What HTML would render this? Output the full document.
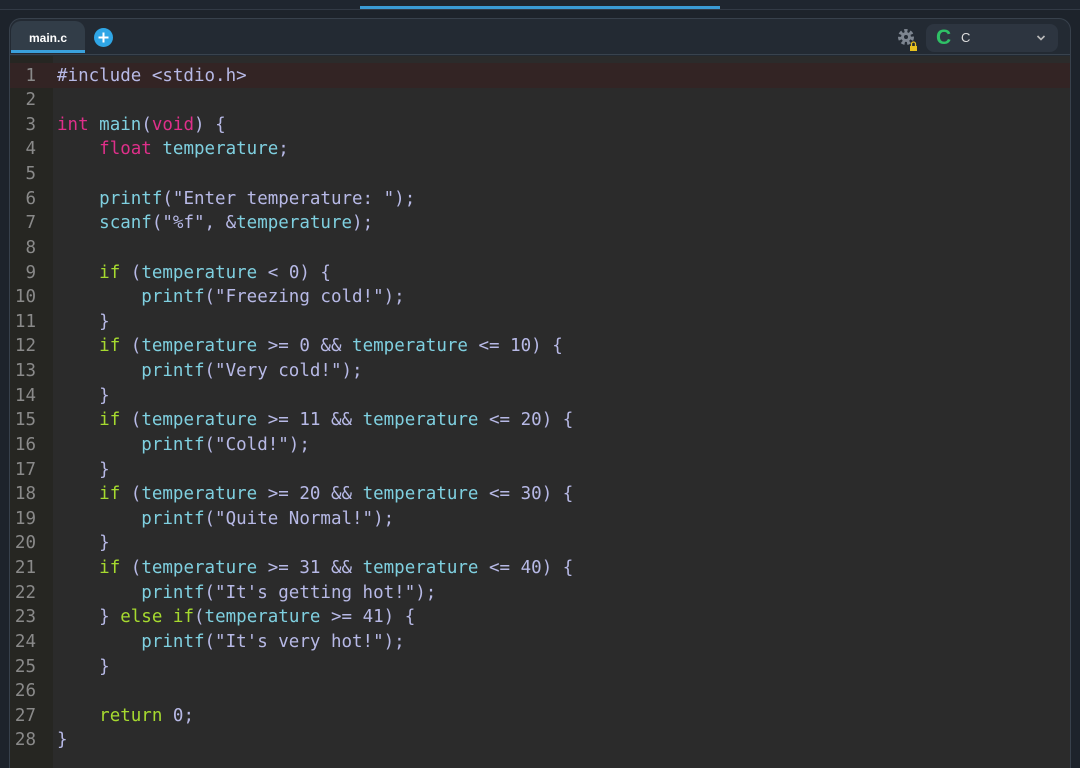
<!DOCTYPE html>
<html style="overflow:hidden;height:768px"><head><style>
body{margin:0;width:1080px;height:768px;background:#1d232b;overflow:hidden;font-family:"Liberation Sans",sans-serif;position:relative}
.top{position:absolute;left:0;top:0;width:1080px;height:9px;background:#1f262f;border-bottom:1px solid #323a45}
.topline{position:absolute;left:360px;top:6px;width:360px;height:3px;background:#3a9bd5}
.panel{position:absolute;left:9px;top:18px;width:1062px;height:750px;background:#232a33;border:1px solid #38414c;border-bottom:none;border-radius:12px 12px 0 0;overflow:hidden;box-sizing:border-box}
.tab{position:absolute;left:1px;top:2px;width:74px;height:32px;background:#323d48;border-radius:10px 10px 0 0;color:#fff;font-weight:bold;font-size:12px;line-height:34px;text-align:center;border-bottom:3px solid #3aa1dc;box-sizing:border-box}
.plus{position:absolute;left:84px;top:9px;width:19px;height:19px;border-radius:50%;background:#2fa6e6}
.sep{position:absolute;left:0;top:35px;width:100%;height:1px;background:#39434e}
.lang{position:absolute;left:916px;top:5px;width:132px;height:28px;background:#2d3540;border-radius:8px;color:#ddd;font-size:13px}
.editor{position:absolute;left:0;top:37px;width:1060px;height:730px;background:#2b2b2b}
.gutter{position:absolute;left:0;top:0;width:43px;height:100%;background:#262622}
.hl{position:absolute;left:0;top:7px;width:100%;height:25px;background:#332424}
pre{position:absolute;left:0;top:7.5px;margin:0;font-family:"DejaVu Sans Mono",monospace;font-size:17.5px;line-height:24.63px;color:#b7b9e6}
.ln{color:#8a8a8a;display:inline-block;width:26px;text-align:right;margin-right:21px}
.k{color:#df2f8a}.c{color:#7fd0e0}.g{color:#a6da2f}
</style></head><body>
<div class="top"></div><div class="topline"></div>
<div class="panel">
<div class="tab">main.c</div>
<div class="plus"><svg width="19" height="19"><path d="M9.5 4.5v10M4.5 9.5h10" stroke="#fff" stroke-width="2"/></svg></div>
<svg style="position:absolute;left:886px;top:8px" width="26" height="26" viewBox="0 0 26 26"><circle cx="10" cy="10" r="6" fill="none" stroke="#7d8590" stroke-width="4" stroke-dasharray="3 2.3"/><circle cx="10" cy="10" r="5" fill="#7d8590"/><circle cx="10" cy="10" r="2" fill="#232a33"/><rect x="14" y="19" width="7" height="5" fill="#e8c21f"/><path d="M15.5 19v-2a2 2 0 0 1 4 0v2" stroke="#e8c21f" fill="none" stroke-width="1.3"/></svg>
<div class="lang"><span style="position:absolute;left:10px;top:2px;color:#2fc066;font-weight:bold;font-size:21px">C</span><span style="position:absolute;left:35px;top:6px">C</span><svg style="position:absolute;right:12px;top:10px" width="10" height="8"><path d="M1.5 2l3.5 3.5L8.5 2" stroke="#bbb" stroke-width="1.6" fill="none"/></svg></div>
<div class="sep"></div>
<div class="editor"><div class="gutter"></div><div class="hl"></div>
<pre><span class="ln">1</span>#include &lt;stdio.h&gt;
<span class="ln">2</span>
<span class="ln">3</span><span class="k">int</span> <span class="c">main</span>(<span class="k">void</span>) {
<span class="ln">4</span>    <span class="k">float</span> <span class="c">temperature</span>;
<span class="ln">5</span>
<span class="ln">6</span>    <span class="c">printf</span>("Enter temperature: ");
<span class="ln">7</span>    <span class="c">scanf</span>("%f", &amp;<span class="c">temperature</span>);
<span class="ln">8</span>
<span class="ln">9</span>    <span class="g">if</span> (<span class="c">temperature</span> &lt; 0) {
<span class="ln">10</span>        <span class="c">printf</span>("Freezing cold!");
<span class="ln">11</span>    }
<span class="ln">12</span>    <span class="g">if</span> (<span class="c">temperature</span> &gt;= 0 &amp;&amp; <span class="c">temperature</span> &lt;= 10) {
<span class="ln">13</span>        <span class="c">printf</span>("Very cold!");
<span class="ln">14</span>    }
<span class="ln">15</span>    <span class="g">if</span> (<span class="c">temperature</span> &gt;= 11 &amp;&amp; <span class="c">temperature</span> &lt;= 20) {
<span class="ln">16</span>        <span class="c">printf</span>("Cold!");
<span class="ln">17</span>    }
<span class="ln">18</span>    <span class="g">if</span> (<span class="c">temperature</span> &gt;= 20 &amp;&amp; <span class="c">temperature</span> &lt;= 30) {
<span class="ln">19</span>        <span class="c">printf</span>("Quite Normal!");
<span class="ln">20</span>    }
<span class="ln">21</span>    <span class="g">if</span> (<span class="c">temperature</span> &gt;= 31 &amp;&amp; <span class="c">temperature</span> &lt;= 40) {
<span class="ln">22</span>        <span class="c">printf</span>("It's getting hot!");
<span class="ln">23</span>    } <span class="g">else</span> <span class="g">if</span>(<span class="c">temperature</span> &gt;= 41) {
<span class="ln">24</span>        <span class="c">printf</span>("It's very hot!");
<span class="ln">25</span>    }
<span class="ln">26</span>
<span class="ln">27</span>    <span class="g">return</span> 0;
<span class="ln">28</span>}</pre>
</div></div>
</body></html>
